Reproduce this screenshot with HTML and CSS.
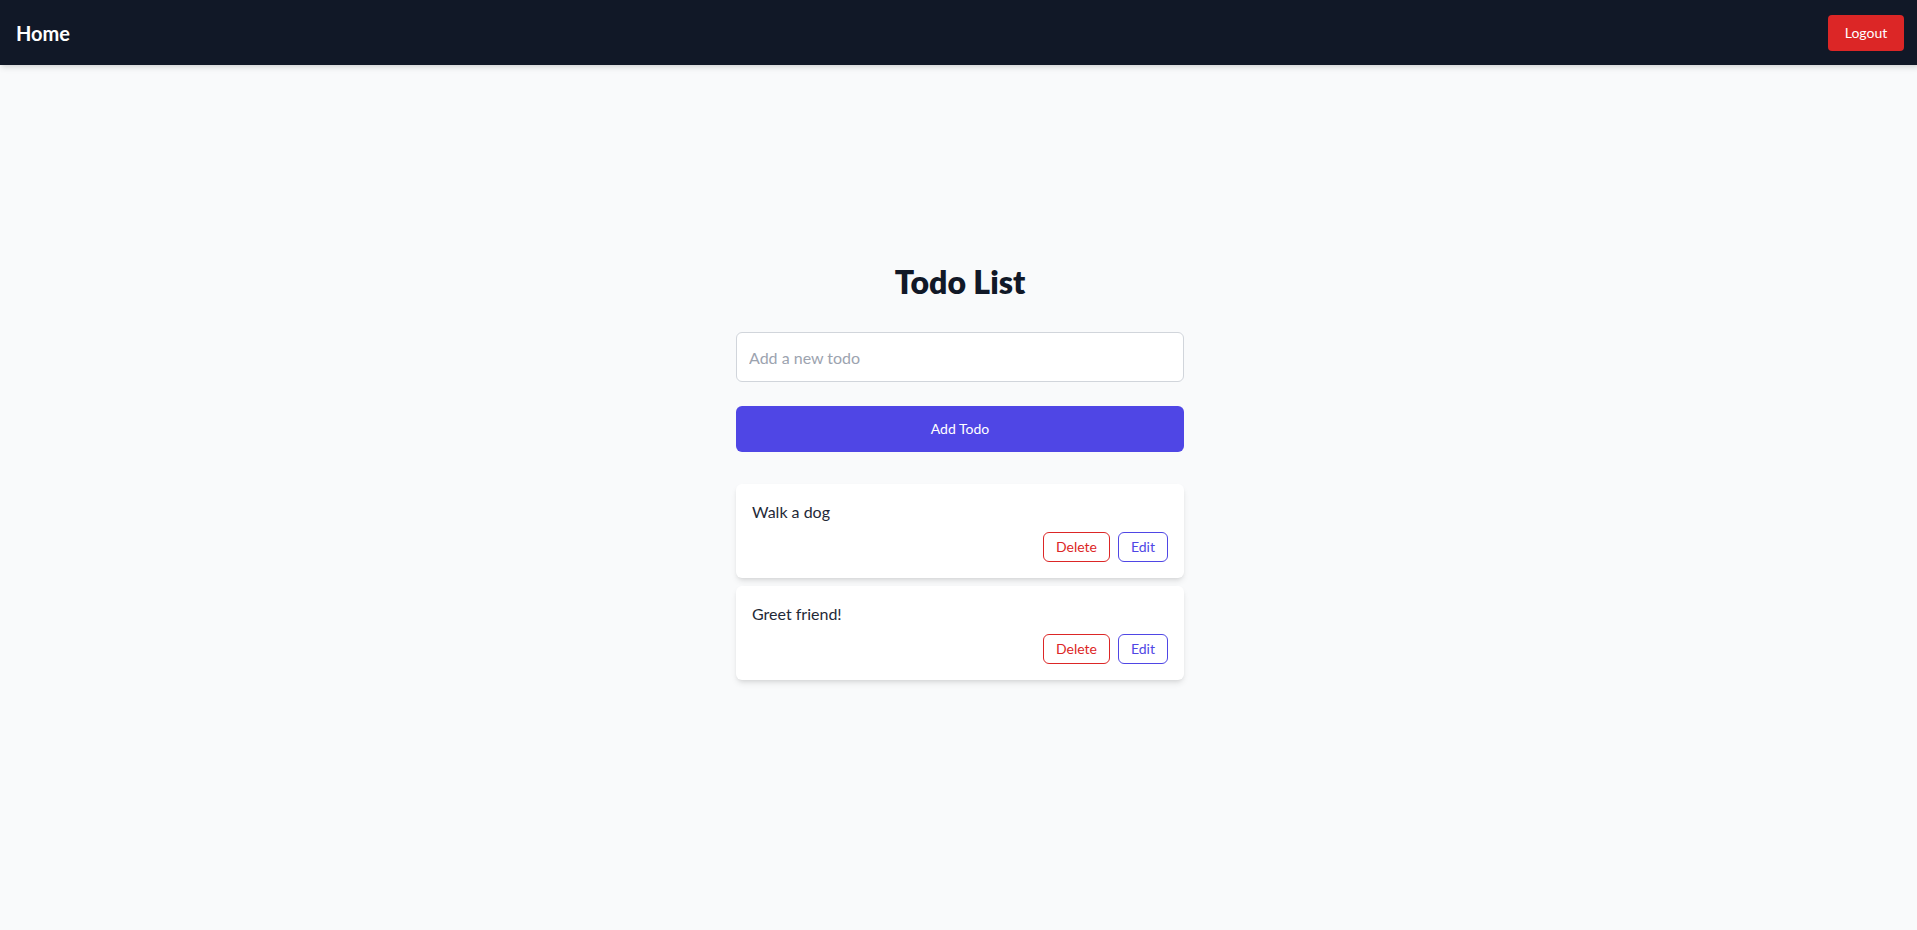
FILE: index.html
```html
<!DOCTYPE html>
<html lang="en">
<head>
<meta charset="utf-8">
<title>Home</title>
<link rel="stylesheet" href="styles.css">
</head>
<body>
<header class="navbar">
  <h1 class="brand">Home</h1>
  <button class="btn-logout">Logout</button>
</header>
<main class="main">
  <section class="todo">
    <h2 class="title">Todo List</h2>
    <input class="todo-input" type="text" placeholder="Add a new todo">
    <button class="btn-add">Add Todo</button>
    <ul class="list">
      <li class="card">
        <p class="card-text">Walk a dog</p>
        <div class="actions">
          <button class="btn-outline btn-delete">Delete</button>
          <button class="btn-outline btn-edit">Edit</button>
        </div>
      </li>
      <li class="card">
        <p class="card-text">Greet friend!</p>
        <div class="actions">
          <button class="btn-outline btn-delete">Delete</button>
          <button class="btn-outline btn-edit">Edit</button>
        </div>
      </li>
    </ul>
  </section>
</main>
</body>
</html>
```
FILE: styles.css
```css
* { box-sizing: border-box; }
html { overflow: hidden; }
html, body { margin: 0; padding: 0; }
body {
  font-family: "Lato", "Noto Sans", sans-serif;
  background: #f9fafb;
  color: #111827;
  width: 1920px;
  min-height: 930px;
}
button, input { font-family: inherit; }
.navbar {
  height: 65px;
  background: #111827;
  display: flex;
  align-items: center;
  justify-content: space-between;
  padding: 0 16px;
  box-shadow: 0 4px 6px -1px rgba(0,0,0,0.1), 0 2px 4px -2px rgba(0,0,0,0.1);
  position: relative;
}
.brand {
  margin: 0;
  color: #fff;
  font-size: 20px;
  line-height: 28px;
  font-weight: 700;
}
.btn-logout {
  background: #dc2626;
  color: #fff;
  border: 0;
  border-radius: 4px;
  font-size: 14px;
  line-height: 20px;
  padding: 8px 16px;
  width: 76px;
  height: 36px;
}
.main {
  display: flex;
  justify-content: center;
  padding-top: 199px;
}
.todo {
  width: 448px;
  display: flex;
  flex-direction: column;
}
.title {
  margin: 0 0 32px;
  text-align: center;
  font-size: 32px;
  line-height: 36px;
  font-weight: 800;
  color: #111827;
}
.todo-input {
  height: 50px;
  border: 1px solid #d1d5db;
  border-radius: 6px;
  background: #fff;
  padding: 12px;
  font-size: 16px;
  line-height: 24px;
  color: #111827;
  outline: none;
}
.todo-input::placeholder { color: #9ca3af; }
.btn-add {
  margin-top: 24px;
  height: 46px;
  border: 0;
  border-radius: 6px;
  background: #4f46e5;
  color: #fff;
  font-size: 14px;
  line-height: 20px;
}
.list {
  list-style: none;
  margin: 32px 0 0;
  padding: 0;
  display: flex;
  flex-direction: column;
  gap: 8px;
}
.card {
  background: #fff;
  border-radius: 6px;
  padding: 16px;
  box-shadow: 0 4px 6px -1px rgba(0,0,0,0.1), 0 2px 4px -2px rgba(0,0,0,0.1);
}
.card-text {
  margin: 0;
  font-size: 16px;
  line-height: 24px;
  color: #1f2937;
}
.actions {
  margin-top: 8px;
  display: flex;
  justify-content: flex-end;
  gap: 8px;
}
.btn-outline {
  background: #fff;
  border-radius: 6px;
  font-size: 14px;
  line-height: 20px;
  padding: 4px 12px;
  height: 30px;
}
.btn-delete { border: 1px solid #dc2626; color: #dc2626; }
.btn-edit { border: 1px solid #4f46e5; color: #4f46e5; }
```
